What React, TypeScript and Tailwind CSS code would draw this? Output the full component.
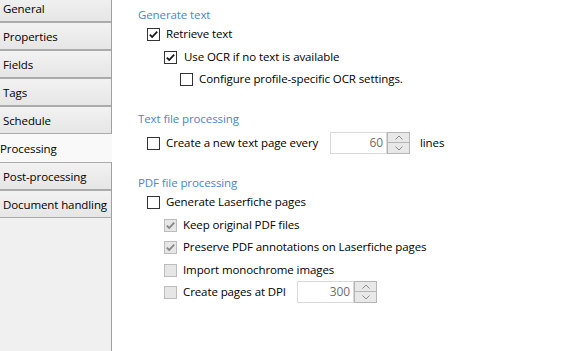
import clsx from "clsx";

const TABS = ["General", "Properties", "Fields", "Tags", "Schedule", "Processing", "Post-processing", "Document handling"];
const ACTIVE = "Processing";

function Check({ checked, disabled }: { checked?: boolean; disabled?: boolean }) {
  return (
    <span
      className={clsx(
        "flex h-[13px] w-[13px] shrink-0 items-center justify-center border",
        disabled ? "border-[#bcbcbc] bg-[#e6e6e6]" : "border-[#333333] bg-white"
      )}
    >
      {checked && (
        <svg width="11" height="11" viewBox="0 0 11 11">
          <path
            d="M1.8 5.6 L4.2 8 L9.2 2.6"
            fill="none"
            stroke={disabled ? "#858585" : "#1a1a1a"}
            strokeWidth="1.8"
          />
        </svg>
      )}
    </span>
  );
}

function Spinner({ value }: { value: string }) {
  return (
    <div className="flex h-[22px]">
      <div className="flex w-[57px] items-center justify-end border border-[#d9d9d9] bg-white pr-[3px] text-[12px] text-[#6d6d6d]">
        {value}
      </div>
      <div className="flex w-[23px] flex-col">
        <span className="flex h-[11px] items-center justify-center border border-[#b5b5b5] bg-[#e8e8e8]">
          <svg width="8" height="5" viewBox="0 0 8 5">
            <path d="M0.5 4.5 L4 1 L7.5 4.5" fill="none" stroke="#8a8a8a" strokeWidth="1" />
          </svg>
        </span>
        <span className="flex h-[11px] items-center justify-center border border-t-0 border-[#b5b5b5] bg-[#e8e8e8]">
          <svg width="8" height="5" viewBox="0 0 8 5">
            <path d="M0.5 0.5 L4 4 L7.5 0.5" fill="none" stroke="#8a8a8a" strokeWidth="1" />
          </svg>
        </span>
      </div>
    </div>
  );
}

function Row({
  indent,
  label,
  checked,
  disabled,
  className,
  children,
  labelWidth,
}: {
  indent: string;
  label: string;
  checked?: boolean;
  disabled?: boolean;
  className?: string;
  children?: React.ReactNode;
  labelWidth?: string;
}) {
  return (
    <div className={clsx("flex h-[22px] items-center gap-[6px]", indent, className)}>
      <Check checked={checked} disabled={disabled} />
      <span className={clsx("whitespace-nowrap", labelWidth)}>{label}</span>
      {children}
    </div>
  );
}

function Header({ children, className }: { children: string; className?: string }) {
  return <div className={clsx("h-[16px] leading-[16px] text-[#4a86cf]", className)}>{children}</div>;
}

export default function App() {
  return (
    <div
      className="flex h-[351px] w-[578px] overflow-hidden bg-white text-[11.5px] tracking-[-0.1px] text-black"
      style={{ fontFamily: '"Segoe UI", "Open Sans", "Noto Sans", sans-serif' }}
    >
      {/* tab strip */}
      <div className="w-[112px] shrink-0 border-r border-[#a0a0a0] bg-[#f0f0f0]">
        <div className="mt-[-6px] flex flex-col">
          {TABS.map((t) =>
            t === ACTIVE ? (
              <div
                key={t}
                className="relative z-10 mr-[-1px] flex h-[28px] items-center whitespace-nowrap bg-[#f9f9f9] pt-px"
              >
                {t}
              </div>
            ) : (
              <div
                key={t}
                className="flex h-[28px] items-center whitespace-nowrap border-y border-[#ababab] bg-gradient-to-b from-[#f2f2f2] to-[#e6e6e6] pl-[3px] pt-px"
              >
                {t}
              </div>
            )
          )}
        </div>
      </div>

      {/* options */}
      <div className="flex-1 pl-[26px] pt-[7px]">
        <Header>Generate text</Header>
        <Row indent="ml-[9px]" label="Retrieve text" checked />
        <Row indent="ml-[26px]" label="Use OCR if no text is available" checked className="mt-px gap-[7px]" />
        <Row indent="ml-[42px]" label="Configure profile-specific OCR settings." />

        <Header className="mt-[21px]">Text file processing</Header>
        <Row indent="ml-[9px]" label="Create a new text page every" labelWidth="w-[158px]" className="mt-[5px]">
          <Spinner value="60" />
          <span className="ml-[4px]">lines</span>
        </Row>

        <Header className="mt-[21px]">PDF file processing</Header>
        <Row indent="ml-[9px]" label="Generate Laserfiche pages" />
        <Row indent="ml-[26px]" label="Keep original PDF files" checked disabled className="mt-px" />
        <Row indent="ml-[26px]" label="Preserve PDF annotations on Laserfiche pages" checked disabled />
        <Row indent="ml-[26px]" label="Import monochrome images" disabled className="mt-px" />
        <Row indent="ml-[26px]" label="Create pages at DPI" disabled labelWidth="w-[108px]">
          <Spinner value="300" />
        </Row>
      </div>
    </div>
  );
}
